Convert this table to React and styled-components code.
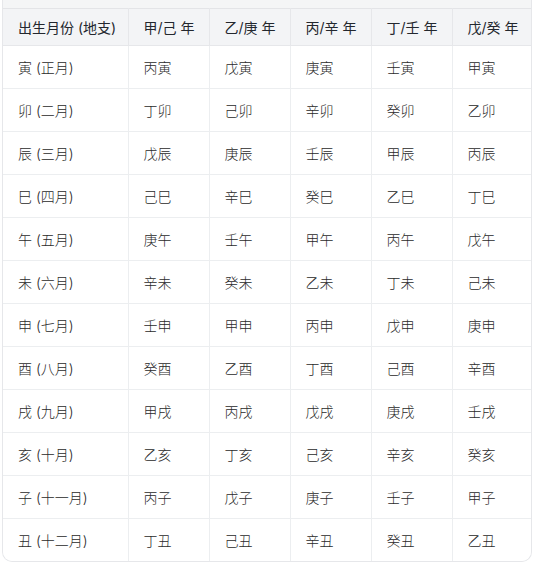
import React from 'react'
import styled, { createGlobalStyle } from 'styled-components'

const GlobalStyle = createGlobalStyle`
  html, body {
    margin: 0;
    padding: 0;
    background: #ffffff;
  }
  body {
    font-family: Inter, "Noto Sans CJK SC", "Noto Sans", sans-serif;
  }
`

const Page = styled.div`
  width: 539px;
  height: 566px;
  padding-left: 2px;
  box-sizing: border-box;
  overflow: hidden;
`

const Frame = styled.div`
  width: 530px;
  box-sizing: border-box;
  border: 1px solid #e6e7ea;
  border-top: none;
  border-radius: 0 0 10px 10px;
  background: #f4f5f6;
  padding-top: 8px;
  overflow: hidden;
`

const Table = styled.table`
  width: 100%;
  border-collapse: collapse;
  table-layout: fixed;
  background: #ffffff;
  border-top: 1px solid #e3e4e7;
`

const Col = styled.col`
  width: ${p => p.$w}px;
`

const Th = styled.th`
  height: 36px;
  padding: 0 0 0 15px;
  text-align: left;
  font-size: 14px;
  font-weight: 400;
  color: #23272e;
  background: #f3f4f6;
  border-bottom: 1px solid #e6e7ea;
  white-space: nowrap;
  & + & {
    border-left: 1px solid #e6e7ea;
  }
`

const Tr = styled.tr`
  &:last-child td {
    border-bottom: none;
  }
`

const Td = styled.td`
  height: 42px;
  padding: 0 0 0 15px;
  font-size: 14px;
  font-weight: 300;
  color: #2a2a2a;
  border-bottom: 1px solid #eceef0;
  white-space: nowrap;
  & + & {
    border-left: 1px solid #eceef0;
  }
`

const heads = ['出生月份 (地支)', '甲/己 年', '乙/庚 年', '丙/辛 年', '丁/壬 年', '戊/癸 年']
const widths = [125, 81, 81, 81, 81, 79]

const rows = [
  ['寅 (正月)', '丙寅', '戊寅', '庚寅', '壬寅', '甲寅'],
  ['卯 (二月)', '丁卯', '己卯', '辛卯', '癸卯', '乙卯'],
  ['辰 (三月)', '戊辰', '庚辰', '壬辰', '甲辰', '丙辰'],
  ['巳 (四月)', '己巳', '辛巳', '癸巳', '乙巳', '丁巳'],
  ['午 (五月)', '庚午', '壬午', '甲午', '丙午', '戊午'],
  ['未 (六月)', '辛未', '癸未', '乙未', '丁未', '己未'],
  ['申 (七月)', '壬申', '甲申', '丙申', '戊申', '庚申'],
  ['酉 (八月)', '癸酉', '乙酉', '丁酉', '己酉', '辛酉'],
  ['戌 (九月)', '甲戌', '丙戌', '戊戌', '庚戌', '壬戌'],
  ['亥 (十月)', '乙亥', '丁亥', '己亥', '辛亥', '癸亥'],
  ['子 (十一月)', '丙子', '戊子', '庚子', '壬子', '甲子'],
  ['丑 (十二月)', '丁丑', '己丑', '辛丑', '癸丑', '乙丑'],
]

export default function App () {
  return (
    <Page>
      <GlobalStyle />
      <Frame>
        <Table>
          <colgroup>
            {widths.map((w, i) => <Col key={i} $w={w} />)}
          </colgroup>
          <thead>
            <tr>
              {heads.map(h => <Th key={h}>{h}</Th>)}
            </tr>
          </thead>
          <tbody>
            {rows.map(r => (
              <Tr key={r[0]}>
                {r.map((c, i) => <Td key={i}>{c}</Td>)}
              </Tr>
            ))}
          </tbody>
        </Table>
      </Frame>
    </Page>
  )
}
